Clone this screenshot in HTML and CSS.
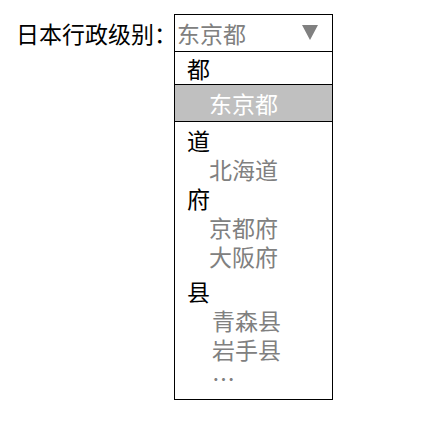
FILE: index.html
```html
<!DOCTYPE html>
<html lang="zh-CN">
<head>
<meta charset="utf-8">
<title>日本行政级别</title>
<link rel="stylesheet" href="styles.css">
</head>
<body>
<div class="row">
  <div class="label">日本行政级别：</div>
  <div class="combo">
    <div class="select">
      <span class="value">东京都</span>
      <svg class="arrow" width="16" height="15" viewBox="0 0 16 15"><polygon points="0,0 16,0 8,15" fill="#808080"/></svg>
    </div>
    <div class="list">
      <div class="head first">都</div>
      <div class="opt selected">东京都</div>
      <div class="group">
        <div class="head">道</div>
        <div class="opt">北海道</div>
      </div>
      <div class="group">
        <div class="head">府</div>
        <div class="opt">京都府</div>
        <div class="opt">大阪府</div>
      </div>
      <div class="group gap">
        <div class="head">县</div>
        <div class="opt wide">青森县</div>
        <div class="opt wide">岩手县</div>
        <div class="opt wide">…</div>
      </div>
    </div>
  </div>
</div>
</body>
</html>
```
FILE: styles.css
```css
html, body {
  background: #fff;
}
body {
  margin: 8px;
  font-family: "Noto Sans CJK SC", "Noto Sans", sans-serif;
  font-size: 23px;
  color: #000;
}
.row {
  display: flex;
  align-items: flex-start;
  padding-top: 6px;
}
.label {
  flex: 0 0 166px;
  width: 166px;
  min-width: 0;
  box-sizing: border-box;
  padding-left: 8px;
  white-space: nowrap;
  line-height: 38px;
}
.combo {
  flex: 0 0 159px;
  position: relative;
  z-index: 1;
  background: #fff;
}
.select {
  height: 36px;
  border: 1px solid #000;
  display: flex;
  align-items: center;
  justify-content: space-between;
  padding: 0 14px 0 2px;
  color: #808080;
  line-height: 36px;
}
.arrow {
  display: block;
  margin-top: -2px;
}
.list {
  border: 1px solid #000;
  border-top: none;
  padding-top: 2px;
  padding-bottom: 6px;
}
.head {
  padding-left: 12px;
  line-height: 29px;
  color: #000;
}
.head.first {
  line-height: 32px;
  margin-top: -2px;
}
.opt {
  padding-left: 34px;
  line-height: 29px;
  color: #808080;
}
.opt.selected {
  background: #c0c0c0;
  color: #fff;
  border-top: 1px solid #000;
  border-bottom: 1px solid #000;
  line-height: 36px;
  margin-bottom: 4px;
}
.gap {
  margin-top: 6px;
}
.opt.wide {
  padding-left: 37px;
}
```
